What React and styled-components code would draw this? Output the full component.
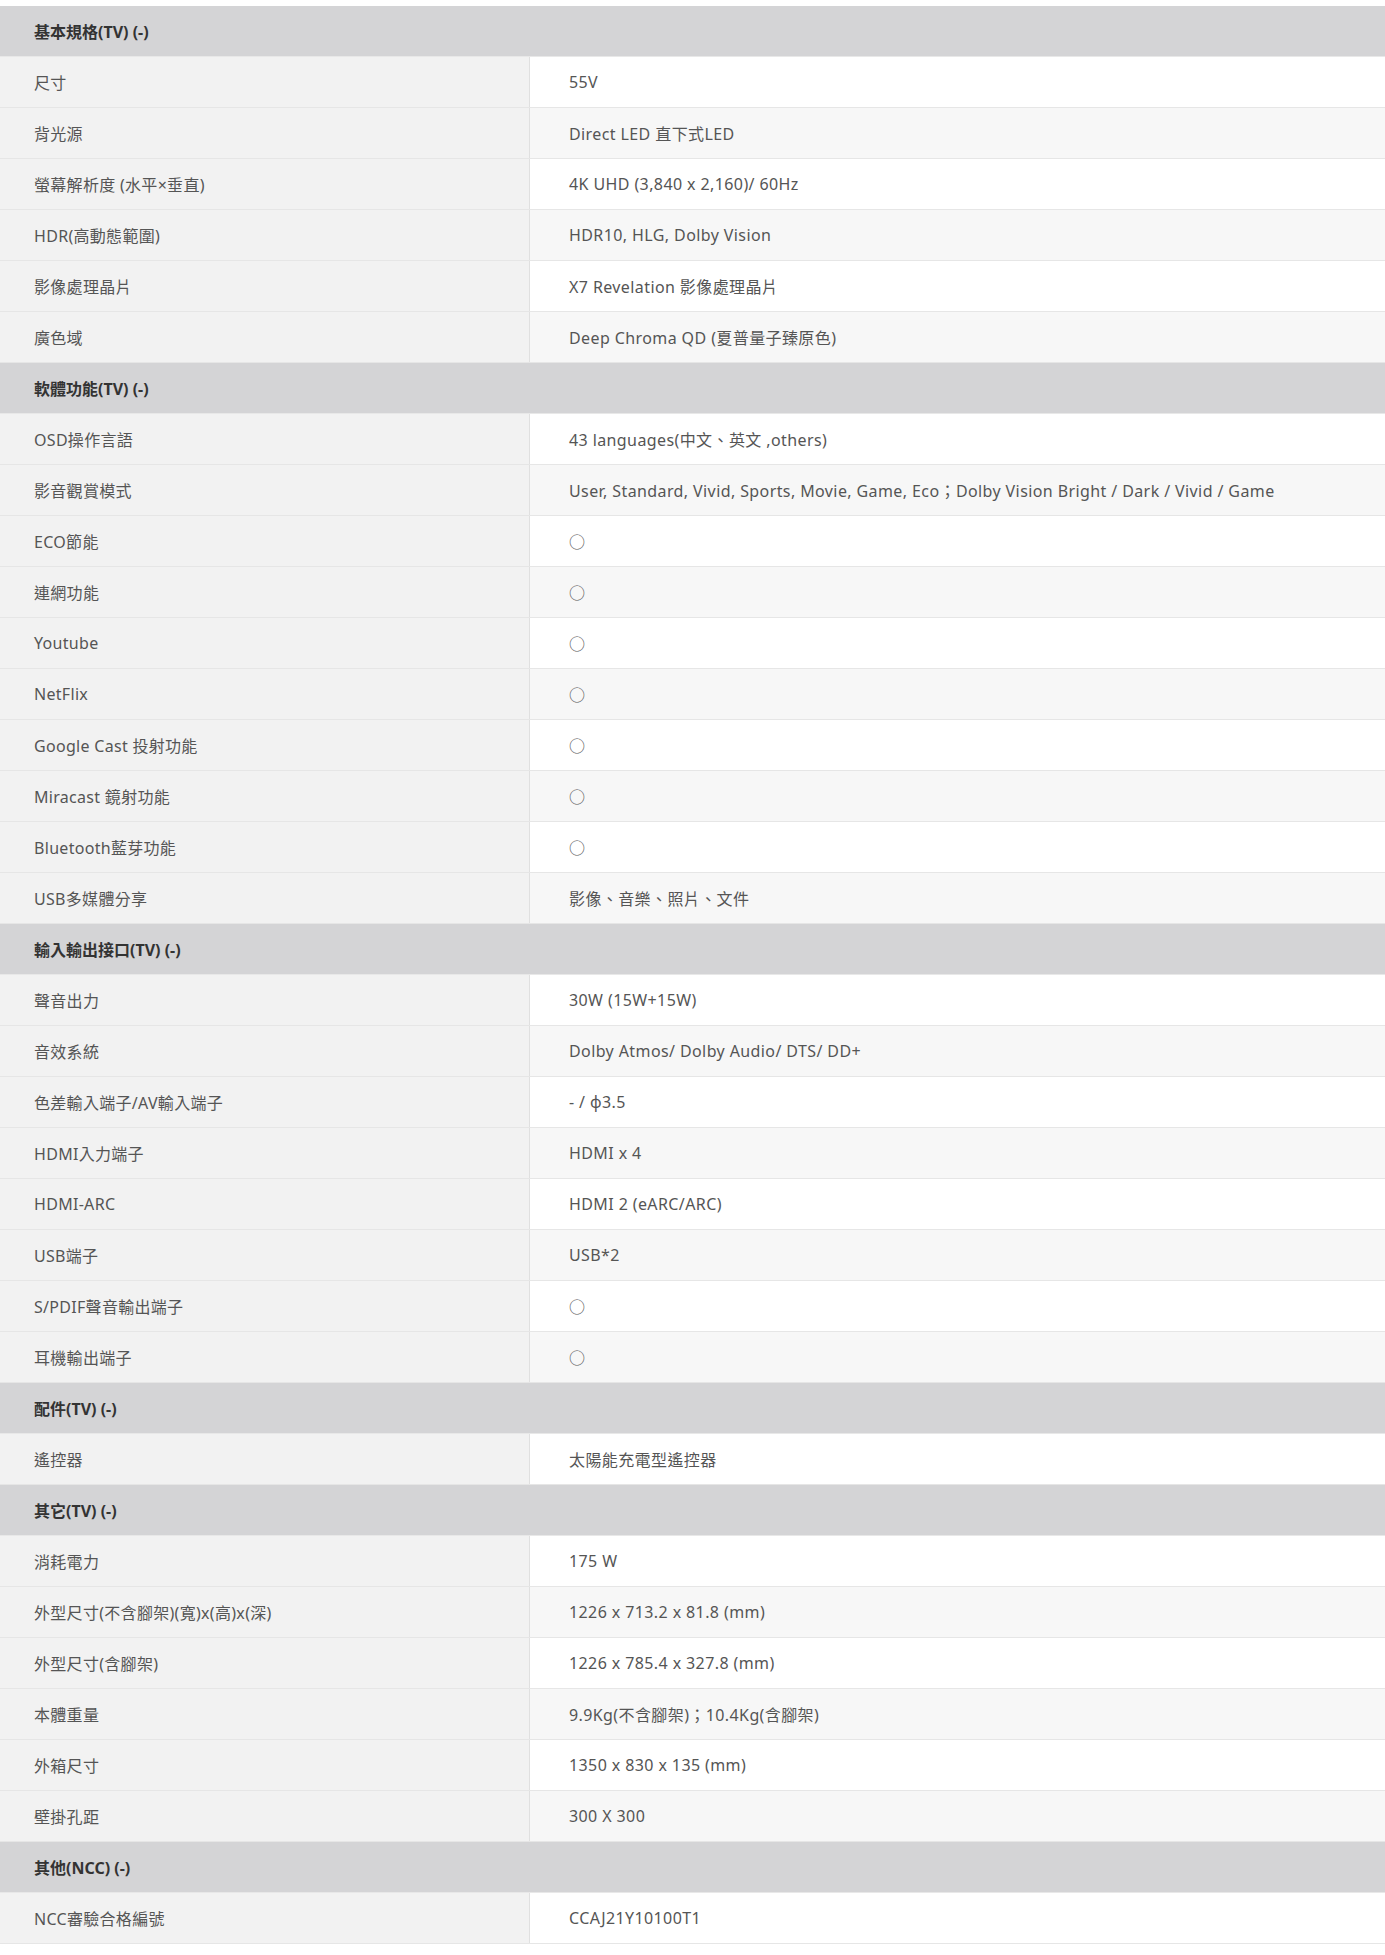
import React from "react";
import styled, { createGlobalStyle } from "styled-components";

const Global = createGlobalStyle`
  body { margin: 0; padding-top: 6px; background: #fff; font-family: "Noto Sans", "Noto Sans CJK TC", sans-serif; }
`;

const Table = styled.div`display:flex;flex-direction:column;width:1385px;`;
const Head = styled.div`
  height: 51px; box-sizing:border-box; background:#d4d4d6; display:flex; align-items:center;
  padding-left:34px; font-weight:700; font-size:16px; color:#333; border-bottom:1px solid #e8e8e8;
`;
const Row = styled.div`
  display:grid; grid-template-columns:530px 1fr; height:51px; box-sizing:border-box;
  border-bottom:1px solid #e6e6e6;
`;
const Label = styled.div`
  background:#f2f2f2; border-right:1px solid #e0e0e0; display:flex; align-items:center;
  padding-left:34px; font-size:16px; color:#555; letter-spacing:0.3px;
`;
const Value = styled.div`
  background:${p => (p.$alt ? "#f7f7f7" : "#fff")}; display:flex; align-items:center;
  padding-left:39px; font-size:16px; color:#555; letter-spacing:0.4px; white-space:nowrap;
`;

const O = "○";
const data = [
  ["基本規格(TV) (-)", [
    ["尺寸", "55V"], ["背光源", "Direct LED 直下式LED"], ["螢幕解析度 (水平×垂直)", "4K UHD (3,840 x 2,160)/ 60Hz"],
    ["HDR(高動態範圍)", "HDR10, HLG, Dolby Vision"], ["影像處理晶片", "X7 Revelation 影像處理晶片"],
    ["廣色域", "Deep Chroma QD (夏普量子臻原色)"]]],
  ["軟體功能(TV) (-)", [
    ["OSD操作言語", "43 languages(中文、英文 ,others)"],
    ["影音觀賞模式", "User, Standard, Vivid, Sports, Movie, Game, Eco；Dolby Vision Bright / Dark / Vivid / Game"],
    ["ECO節能", O], ["連網功能", O], ["Youtube", O], ["NetFlix", O], ["Google Cast 投射功能", O],
    ["Miracast 鏡射功能", O], ["Bluetooth藍芽功能", O], ["USB多媒體分享", "影像、音樂、照片、文件"]]],
  ["輸入輸出接口(TV) (-)", [
    ["聲音出力", "30W (15W+15W)"], ["音效系統", "Dolby Atmos/ Dolby Audio/ DTS/ DD+"],
    ["色差輸入端子/AV輸入端子", "- / φ3.5"], ["HDMI入力端子", "HDMI x 4"], ["HDMI-ARC", "HDMI 2 (eARC/ARC)"],
    ["USB端子", "USB*2"], ["S/PDIF聲音輸出端子", O], ["耳機輸出端子", O]]],
  ["配件(TV) (-)", [["遙控器", "太陽能充電型遙控器"]]],
  ["其它(TV) (-)", [
    ["消耗電力", "175 W"], ["外型尺寸(不含腳架)(寬)x(高)x(深)", "1226 x 713.2 x 81.8 (mm)"],
    ["外型尺寸(含腳架)", "1226 x 785.4 x 327.8 (mm)"], ["本體重量", "9.9Kg(不含腳架)；10.4Kg(含腳架)"],
    ["外箱尺寸", "1350 x 830 x 135 (mm)"], ["壁掛孔距", "300 X 300"]]],
  ["其他(NCC) (-)", [["NCC審驗合格編號", "CCAJ21Y10100T1"]]],
];

export default function App() {
  return (
    <>
      <Global />
      <Table>
        {data.map(([h, rows]) => (
          <React.Fragment key={h}>
            <Head>{h}</Head>
            {rows.map(([l, v], i) => (
              <Row key={l}>
                <Label>{l}</Label>
                <Value $alt={i % 2 === 1}>{v}</Value>
              </Row>
            ))}
          </React.Fragment>
        ))}
      </Table>
    </>
  );
}
